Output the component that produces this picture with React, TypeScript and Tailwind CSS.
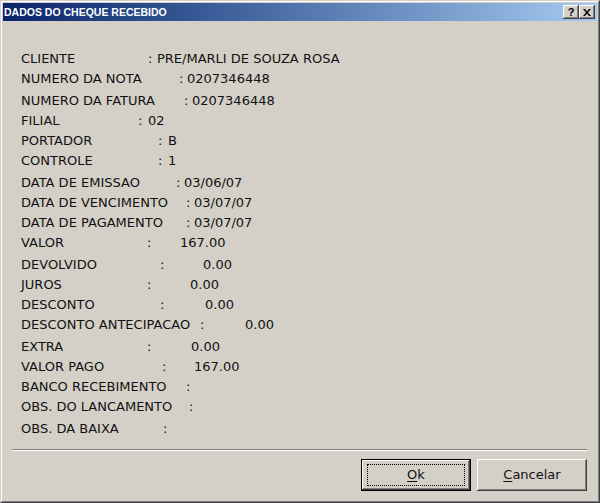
const rows = [
  { label: "CLIENTE", value: "PRE/MARLI DE SOUZA ROSA", lw: "w-[127px]", cw: "w-[9px]", gap: "" },
  { label: "NUMERO DA NOTA", value: "0207346448", lw: "w-[158px]", cw: "w-[8px]", gap: "" },
  { label: "NUMERO DA FATURA", value: "0207346448", lw: "w-[163px]", cw: "w-[8px]", gap: "mt-[2px]" },
  { label: "FILIAL", value: "02", lw: "w-[117px]", cw: "w-[10px]", gap: "" },
  { label: "PORTADOR", value: "B", lw: "w-[137px]", cw: "w-[10px]", gap: "" },
  { label: "CONTROLE", value: "1", lw: "w-[137px]", cw: "w-[10px]", gap: "" },
  { label: "DATA DE EMISSAO", value: "03/06/07", lw: "w-[155px]", cw: "w-[8px]", gap: "mt-[2px]" },
  { label: "DATA DE VENCIMENTO", value: "03/07/07", lw: "w-[165px]", cw: "w-[8px]", gap: "" },
  { label: "DATA DE PAGAMENTO", value: "03/07/07", lw: "w-[165px]", cw: "w-[8px]", gap: "" },
  { label: "VALOR", value: "167.00", lw: "w-[126px]", cw: "w-[33px]", gap: "" },
  { label: "DEVOLVIDO", value: "0.00", lw: "w-[139px]", cw: "w-[43px]", gap: "mt-[2px]" },
  { label: "JUROS", value: "0.00", lw: "w-[126px]", cw: "w-[43px]", gap: "" },
  { label: "DESCONTO", value: "0.00", lw: "w-[139px]", cw: "w-[45px]", gap: "" },
  { label: "DESCONTO ANTECIPACAO", value: "0.00", lw: "w-[179px]", cw: "w-[45px]", gap: "" },
  { label: "EXTRA", value: "0.00", lw: "w-[126px]", cw: "w-[44px]", gap: "mt-[2px]" },
  { label: "VALOR PAGO", value: "167.00", lw: "w-[141px]", cw: "w-[32px]", gap: "" },
  { label: "BANCO RECEBIMENTO", value: "", lw: "w-[165px]", cw: "w-[8px]", gap: "" },
  { label: "OBS. DO LANCAMENTO", value: "", lw: "w-[168px]", cw: "w-[8px]", gap: "" },
  { label: "OBS. DA BAIXA", value: "", lw: "w-[142px]", cw: "w-[8px]", gap: "mt-[2px]" },
];

const raised =
  "shadow-[inset_-1px_-1px_#404040,inset_1px_1px_#ffffff,inset_-2px_-2px_#808080,inset_2px_2px_#d4d0c8]";

function CaptionButton({ children }: { children: React.ReactNode }) {
  return (
    <div className={`flex h-[14px] w-[16px] items-center justify-center bg-[#d4d0c8] ${raised}`}>
      {children}
    </div>
  );
}

export default function App() {
  return (
    <div className="h-[503px] w-[600px] border border-t-[#d4d0c8] border-l-[#d4d0c8] border-b-[#404040] border-r-[#404040] bg-[#d4d0c8]">
      <div className="flex h-full flex-col border border-t-white border-l-white border-b-[#808080] border-r-[#808080] p-[1px]">
        {/* caption */}
        <div className="flex h-[18px] shrink-0 items-center justify-between bg-gradient-to-r from-[#0a246a] to-[#a6caf0] pl-[1px] pr-[2px]">
          <span className="font-['Liberation_Sans',Arial,sans-serif] text-[10.5px] font-bold leading-none text-white">
            DADOS DO CHEQUE RECEBIDO
          </span>
          <div className="flex">
            <CaptionButton>
              <span className="mt-[1px] font-['Liberation_Sans',Arial,sans-serif] text-[11px] font-bold leading-none text-black">
                ?
              </span>
            </CaptionButton>
            <CaptionButton>
              <svg width="8" height="7" viewBox="0 0 8 7" className="mt-[1px]">
                <path d="M0 0h2l2 2.5 2-2.5h2l-3 3.5 3 3.5h-2l-2-2.5-2 2.5h-2l3-3.5z" fill="#000" />
              </svg>
            </CaptionButton>
          </div>
        </div>

        {/* body */}
        <div className="flex flex-1 flex-col font-['DejaVu_Sans',Verdana,sans-serif] text-[13px] text-[#111]">
          <div className="pl-[18px] pt-[28px]">
            {rows.map((r) => (
              <div key={r.label} className={`flex h-[20px] items-center whitespace-nowrap leading-[20px] ${r.gap}`}>
                <span className={`shrink-0 ${r.lw}`}>{r.label}</span>
                <span className={`shrink-0 ${r.cw}`}>:</span>
                <span>{r.value}</span>
              </div>
            ))}
          </div>

          <div className="ml-[9px] mr-[10px] mt-[10px] border-t border-b border-t-[#808080] border-b-white" />

          <div className="mr-[10px] mt-[8px] flex justify-end gap-[6px]">
            <button className="h-[32px] w-[110px] border border-black bg-[#d4d0c8] p-0">
              <div className={`flex h-full w-full items-center justify-center ${raised}`}>
                <div className="flex h-[22px] w-[98px] items-center justify-center border border-dotted border-black">
                  <span>
                    <span className="underline underline-offset-2">O</span>k
                  </span>
                </div>
              </div>
            </button>
            <button className={`flex h-[32px] w-[110px] items-center justify-center bg-[#d4d0c8] ${raised}`}>
              <span>
                <span className="underline underline-offset-2">C</span>ancelar
              </span>
            </button>
          </div>
        </div>
      </div>
    </div>
  );
}
